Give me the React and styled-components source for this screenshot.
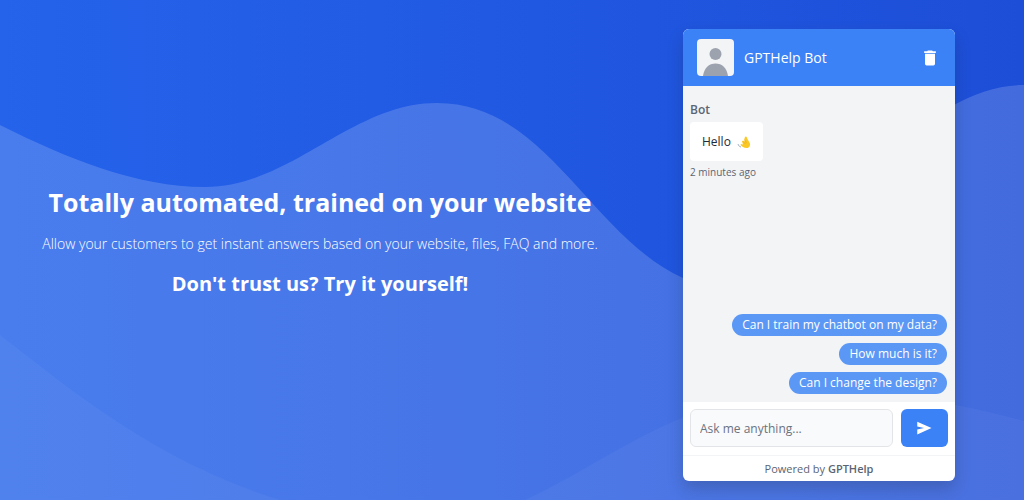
import React, { useState } from "react";
import styled, { createGlobalStyle } from "styled-components";

const GlobalStyle = createGlobalStyle`
  *, *::before, *::after { box-sizing: border-box; }
  body {
    margin: 0;
    font-family: "Segoe UI", "Open Sans", "Noto Sans", sans-serif;
    color: #5b6472;
  }
  button, input { font: inherit; }
`;

const Hero = styled.main`
  position: relative;
  isolation: isolate;
  display: grid;
  grid-template-columns: minmax(0, 1fr) 272px;
  column-gap: 43px;
  align-items: center;
  min-height: 100vh;
  padding: 29px 69px 19px 0;
  overflow: hidden;
  background: linear-gradient(to right, #2563eb, #1d4ed8);
`;

const Waves = styled.svg`
  position: absolute;
  inset: 0;
  z-index: -1;
  width: 100%;
  height: 100%;
`;

const Pitch = styled.section`
  padding: 0 24px 26px;
  text-align: center;
  color: #fff;
`;

const Title = styled.h1`
  margin: 0;
  font-size: 25px;
  line-height: 36px;
  font-weight: 700;
`;

const Lead = styled.p`
  margin: 12px 0;
  font-size: 14px;
  line-height: 24px;
  font-weight: 300;
`;

const Invite = styled.h2`
  margin: 0;
  font-size: 20px;
  line-height: 32px;
  font-weight: 700;
`;

const Chat = styled.section`
  display: flex;
  flex-direction: column;
  min-height: 452px;
  border-radius: 6px;
  overflow: hidden;
  background: #fff;
  box-shadow: 0 8px 16px rgba(30, 41, 59, 0.24);
`;

const ChatHeader = styled.header`
  display: flex;
  align-items: center;
  gap: 10px;
  padding: 10px 14px;
  background: #3b82f6;
  color: #fff;
`;

const Avatar = styled.svg`
  width: 37px;
  height: 37px;
  border-radius: 4px;
  background: #f3f4f6;
`;

const BotName = styled.h3`
  flex: 1;
  margin: 0;
  font-size: 14px;
  line-height: 20px;
  font-weight: 400;
`;

const IconButton = styled.button`
  display: grid;
  place-items: center;
  width: 22px;
  height: 22px;
  padding: 0;
  border: 0;
  background: none;
  color: inherit;
  cursor: pointer;
`;

const Icon = styled.svg`
  width: ${(p) => p.$size}px;
  height: ${(p) => p.$size}px;
`;

const Conversation = styled.div`
  flex: 1;
  display: flex;
  flex-direction: column;
  padding: 14px 8px 8px 7px;
  background: #f3f4f6;
`;

const Message = styled.article`
  display: flex;
  flex-direction: column;
  align-items: flex-start;
`;

const Author = styled.span`
  font-size: 12px;
  line-height: 20px;
  font-weight: 600;
`;

const Bubble = styled.p`
  display: flex;
  align-items: center;
  gap: 6px;
  margin: 2px 0;
  padding: 10px 12px;
  border-radius: 4px;
  background: #fff;
  color: #1f2937;
  font-size: 12px;
  line-height: 19px;
`;

const Time = styled.time`
  font-size: 10px;
  line-height: 18px;
`;

const Suggestions = styled.ul`
  display: flex;
  flex-direction: column;
  align-items: flex-end;
  gap: 7px;
  margin: auto 0 0;
  padding: 0;
  list-style: none;
`;

const Suggestion = styled.button`
  display: block;
  padding: 1px 10px;
  border: 0;
  border-radius: 11px;
  background: #5b97f5;
  color: #fff;
  font-size: 12px;
  line-height: 20px;
  cursor: pointer;
`;

const Composer = styled.form`
  display: flex;
  gap: 8px;
  padding: 7px 7px 8px;
`;

const Question = styled.input`
  flex: 1;
  min-width: 0;
  height: 38px;
  padding: 0 9px;
  border: 1px solid #e2e4e8;
  border-radius: 6px;
  background: #f9fafb;
  color: #1f2937;
  font-size: 12px;
  &::placeholder { color: #6b7280; opacity: 1; }
`;

const Send = styled.button`
  display: grid;
  place-items: center;
  width: 47px;
  height: 38px;
  padding: 0 2px 0 0;
  border: 0;
  border-radius: 6px;
  background: #3b82f6;
  color: #fff;
  cursor: pointer;
`;

const Credit = styled.footer`
  padding: 3px;
  border-top: 1px solid #f3f4f6;
  text-align: center;
  font-size: 11px;
  line-height: 19px;
`;

const CreditLink = styled.a`
  color: inherit;
  font-weight: 600;
  text-decoration: none;
`;

const questions = [
  "Can I train my chatbot on my data?",
  "How much is it?",
  "Can I change the design?",
];

export default function App() {
  const [draft, setDraft] = useState("");
  return (
    <>
      <GlobalStyle />
      <Hero>
        <Waves viewBox="0 0 1024 500" preserveAspectRatio="none" aria-hidden="true">
          <path
            fill="#fff"
            fillOpacity="0.17"
            d="M0 125C68 159 137 187 205 187C291 187 351 103 437 103C547 103 590 236 683 278C780 320 890 85 1024 85V500H0Z"
          />
          <path
            fill="#fff"
            fillOpacity="0.04"
            d="M0 335C60 380 150 460 280 500H0ZM525 500C610 460 666 408 768 396C860 386 940 398 1024 421V500Z"
          />
        </Waves>

        <Pitch>
          <Title>Totally automated, trained on your website</Title>
          <Lead>
            Allow your customers to get instant answers based on your website, files, FAQ and more.
          </Lead>
          <Invite>Don't trust us? Try it yourself!</Invite>
        </Pitch>

        <Chat aria-label="Chat">
          <ChatHeader>
            <Avatar viewBox="0 0 37 37" aria-hidden="true">
              <circle cx="18.5" cy="15" r="6" fill="#9ca3af" />
              <path d="M6 37C7 29 12 24.500 18.500 24.500S30 29 31 37Z" fill="#9ca3af" />
            </Avatar>
            <BotName>GPTHelp Bot</BotName>
            <IconButton type="button" aria-label="Clear conversation">
              <Icon $size={20} viewBox="0 0 24 24" fill="currentColor" aria-hidden="true">
                <path d="M6 19a2 2 0 0 0 2 2h8a2 2 0 0 0 2-2V7H6v12ZM19 4h-3.500l-1-1h-5l-1 1H5v2h14V4Z" />
              </Icon>
            </IconButton>
          </ChatHeader>

          <Conversation>
            <Message>
              <Author>Bot</Author>
              <Bubble>
                Hello
                <Icon $size={14} viewBox="0 0 14 14" role="img" aria-label="waving hand">
                  <path d="M8.500 1.500C9.500 1 10 2.500 10.500 4L13 8.500C13.500 11 12 13 9.500 13C7 13 4.500 11.500 3.500 10L4 9L6 9.500L5 6.500L6 5.500L7.500 6.500L7.500 3Z" fill="#fbc926" />
                  <path d="M6 6.500L8.500 9M7.500 4.500L9.500 8" stroke="#e9a51b" strokeWidth="0.600" fill="none" />
                  <path d="M1 9C1.500 11 2.500 11.500 4 12" stroke="#8aa0b8" strokeWidth="0.800" fill="none" />
                </Icon>
              </Bubble>
              <Time>2 minutes ago</Time>
            </Message>
            <Suggestions>
              {questions.map((q) => (
                <li key={q}>
                  <Suggestion type="button" onClick={() => setDraft(q)}>{q}</Suggestion>
                </li>
              ))}
            </Suggestions>
          </Conversation>

          <Composer onSubmit={(e) => e.preventDefault()}>
            <Question
              aria-label="Your question"
              placeholder="Ask me anything..."
              value={draft}
              onChange={(e) => setDraft(e.target.value)}
            />
            <Send type="submit" aria-label="Send">
              <Icon $size={18} viewBox="0 0 24 24" fill="currentColor" aria-hidden="true">
                <path d="M3 20.500V14L12 12L3 10V3.500L22 12Z" />
              </Icon>
            </Send>
          </Composer>
          <Credit>
            Powered by <CreditLink href="#gpthelp">GPTHelp</CreditLink>
          </Credit>
        </Chat>
      </Hero>
    </>
  );
}
